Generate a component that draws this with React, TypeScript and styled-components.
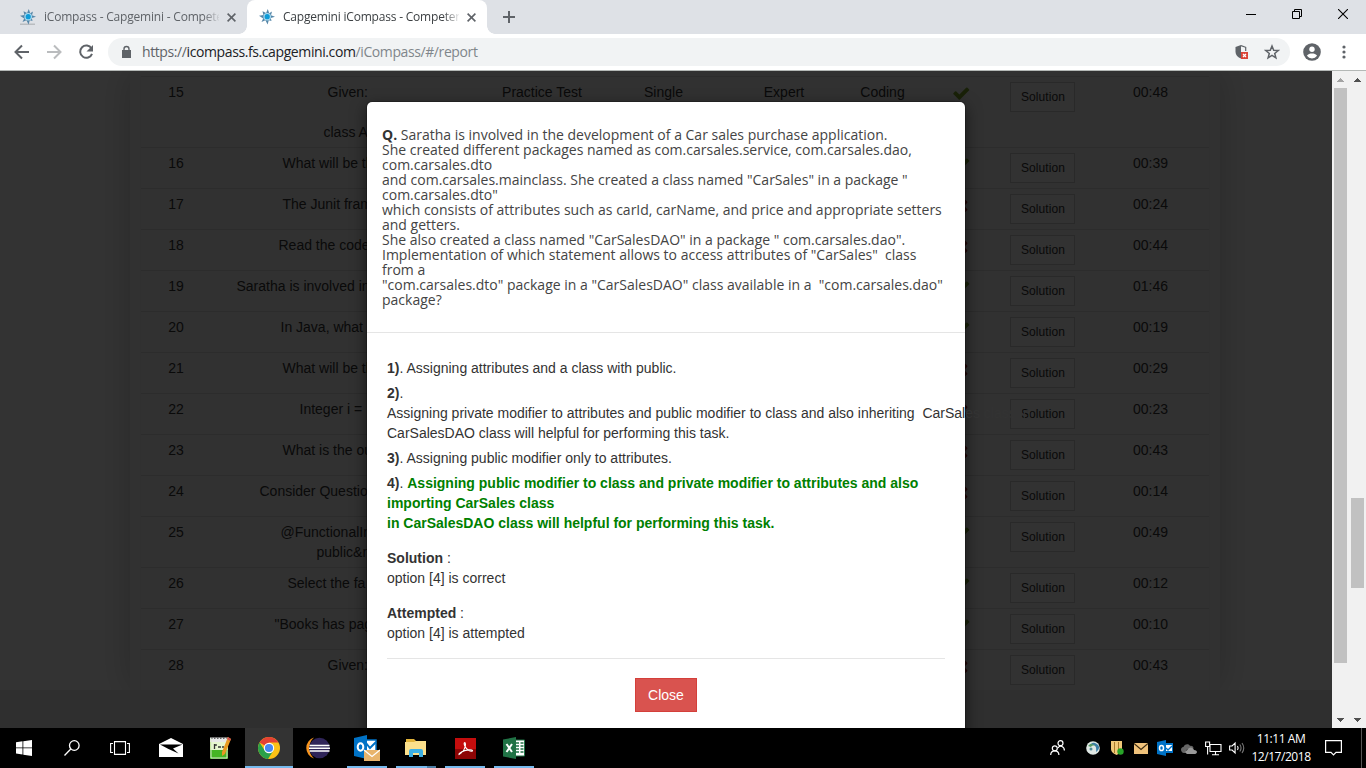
import React from 'react';
import styled, { createGlobalStyle, css } from 'styled-components';

const Global = createGlobalStyle`
  * { box-sizing: border-box; }
  html, body { margin: 0; padding: 0; overflow: hidden; }
  svg { display: block; flex: none; }
`;

const uiFont = `"Open Sans", "Noto Sans", sans-serif`;
const bodyFont = `"Liberation Sans", Arial, sans-serif`;

const Screen = styled.div`
  width: 1366px;
  height: 768px;
  display: flex;
  flex-direction: column;
  overflow: hidden;
  font-family: ${bodyFont};
`;

/* ---------- browser chrome ---------- */

const TabStrip = styled.div`
  height: 34px;
  background: #dee1e6;
  display: flex;
  align-items: stretch;
`;

const Tab = styled.div<{ $active?: boolean }>`
  position: relative;
  width: ${p => (p.$active ? 240 : 239)}px;
  margin-left: ${p => (p.$active ? 0 : 8)}px;
  padding: 0 11px 0 12px;
  display: flex;
  align-items: center;
  gap: 8px;
  border-radius: 8px 8px 0 0;
  background: ${p => (p.$active ? '#fff' : 'transparent')};
  ${p =>
    p.$active &&
    css`
      &::before,
      &::after {
        content: '';
        position: absolute;
        bottom: 0;
        width: 8px;
        height: 8px;
      }
      &::before {
        left: -8px;
        background: radial-gradient(circle at 0 0, transparent 7.5px, #fff 8px);
      }
      &::after {
        right: -8px;
        background: radial-gradient(circle at 100% 0, transparent 7.5px, #fff 8px);
      }
    `}
`;

const TabTitle = styled.span<{ $active?: boolean }>`
  flex: 1;
  min-width: 0;
  overflow: hidden;
  white-space: nowrap;
  font: 12px/16px ${uiFont};
  letter-spacing: -0.2px;
  color: ${p => (p.$active ? '#3c4043' : '#5f6368')};
  mask-image: linear-gradient(to right, #000 91%, transparent 101%);
`;

const NewTab = styled.div`
  margin-left: 16px;
  display: flex;
  align-items: center;
`;

const WindowButtons = styled.div`
  margin-left: auto;
  height: 28px;
  display: flex;
`;

const WindowButton = styled.div`
  width: 46px;
  display: flex;
  align-items: center;
  justify-content: center;
`;

const Toolbar = styled.div`
  height: 37px;
  background: #fff;
  border-bottom: 1px solid #b4b8b6;
  display: flex;
  align-items: center;
  padding-left: 12px;
`;

const NavButtons = styled.div`
  display: flex;
  gap: 12px;
  width: 96px;
`;

const Omnibox = styled.div`
  width: 1182px;
  height: 28px;
  border-radius: 14px;
  background: #f1f3f4;
  display: flex;
  align-items: center;
  padding: 0 10px 0 12px;
`;

const Url = styled.span`
  margin-left: 9px;
  flex: 1;
  font: 14px/20px ${uiFont};
  letter-spacing: -0.4px;
  color: #80868b;
  white-space: nowrap;
  b { font-weight: 400; color: #202124; }
  i { font-style: normal; color: #5f6368; }
`;

const OmniIcons = styled.div`
  display: flex;
  gap: 14px;
  align-items: center;
`;

const ToolbarEnd = styled.div`
  display: flex;
  align-items: center;
  gap: 20px;
  margin-left: 12px;
`;

/* ---------- page ---------- */

const Viewport = styled.div`
  height: 657px;
  display: flex;
`;

const Page = styled.div`
  position: relative;
  width: 1332px;
  height: 657px;
  overflow: hidden;
  background: #e8e8e8;
`;

const Sheet = styled.div`
  height: 619px;
  overflow: hidden;
  background: #fff;
  padding: 0 112px 0 130px;
`;

const Panel = styled.div`
  height: 619px;
  background: #f6f6f6;
  box-shadow: 0 0 34px rgba(0, 0, 0, 0.2);
  padding: 5px 10px 0;
`;

const Table = styled.div`
  border: solid #ededed;
  border-width: 0 1px;
  background: #f4f4f4;
`;

const Row = styled.div<{ $lines?: number }>`
  display: grid;
  grid-template-columns: 70px 273px 116px 127px 114px 83px 74px 89px 1fr;
  height: ${p => (p.$lines === 3 ? 71 : p.$lines === 2 ? 51 : 41)}px;
  padding-top: 5px;
  border-top: 1px solid #dadada;
  font-size: 14px;
  line-height: 20px;
  color: #333;
  text-align: center;
`;

const Cell = styled.div``;

const QuestionCell = styled.div`
  text-align: left;
  white-space: pre;
  overflow: hidden;
`;

const QuestionLine = styled.div<{ $indent: number }>`
  height: 20px;
  padding-left: ${p => p.$indent + 0.5}px;
`;

const MarkCell = styled.div`
  display: flex;
  justify-content: center;
  padding-top: 2px;
`;

const TimeCell = styled.div`
  padding-left: 5px;
`;

const SolutionButton = styled.button`
  width: 65px;
  height: 30px;
  margin: 0;
  padding: 0 0 0 1px;
  border: 1px solid #ccc;
  background: #f7f7f7;
  font: 12px/18px ${bodyFont};
  letter-spacing: 0.1px;
  color: #333;
`;

const Backdrop = styled.div`
  position: absolute;
  inset: 0;
  background: rgba(0, 0, 0, 0.8);
`;

const Modal = styled.div`
  position: absolute;
  left: 366px;
  top: 30px;
  width: 600px;
  height: 700px;
  border: 1px solid rgba(0, 0, 0, 0.2);
  border-radius: 6px;
  background: #fff;
  background-clip: padding-box;
  box-shadow: 0 5px 15px rgba(0, 0, 0, 0.5);
  color: #333;
`;

const ModalHeader = styled.div`
  height: 231px;
  padding: 25px 15px 0;
  border-bottom: 1px solid #e5e5e5;
  font: 14px/15px "Open Sans", sans-serif;
  color: #444;
  white-space: pre;
  b { color: #333; }
`;

const ModalBody = styled.div`
  padding: 25px 20px 0;
  font-size: 14px;
  line-height: 20px;
`;

const Choice = styled.div`
  margin-bottom: 5px;
  white-space: pre;
`;

const Correct = styled.b`
  color: #008000;
`;

const Note = styled.div`
  padding-top: 10px;
  margin-bottom: 5px;
`;

const ModalFooter = styled.div`
  margin-top: 15px;
  padding-top: 19px;
  border-top: 1px solid #e5e5e5;
  display: flex;
  justify-content: center;
`;

const CloseButton = styled.button`
  width: 62px;
  height: 34px;
  padding: 0;
  border: 1px solid #d43f3a;
  background: #d9534f;
  color: #fff;
  font: 14px/20px ${bodyFont};
`;

const ScrollTrack = styled.div`
  width: 17px;
  height: 657px;
  background: #f1f1f1;
  display: flex;
  flex-direction: column;
  align-items: center;
`;

const ScrollThumb = styled.div<{ $before: number; $size: number }>`
  width: 13px;
  margin-top: ${p => p.$before}px;
  height: ${p => p.$size}px;
  background: #c1c1c1;
`;

const ScrollEnd = styled.div<{ $last?: boolean }>`
  height: 17px;
  display: flex;
  align-items: center;
  margin-top: ${p => (p.$last ? 'auto' : '0')};
`;

/* ---------- taskbar ---------- */

const Taskbar = styled.div`
  height: 40px;
  background: #000;
  display: flex;
`;

const TaskButton = styled.div<{ $active?: boolean }>`
  position: relative;
  width: 48px;
  height: 40px;
  display: flex;
  align-items: center;
  justify-content: center;
  background: ${p => (p.$active ? '#333' : 'transparent')};
`;

const TaskApps = styled.div`
  display: flex;
  gap: 1px;
  margin-left: 3px;
`;

const Underline = styled.span<{ $full?: boolean; $stack?: boolean }>`
  position: absolute;
  bottom: 0;
  left: ${p => (p.$full ? 0 : 4)}px;
  right: ${p => (p.$full ? 0 : 4)}px;
  height: 2px;
  background: ${p => (p.$stack ? 'linear-gradient(to right, #76b9ed 31px, #4d7ea5 31px)' : '#76b9ed')};
`;

const Tray = styled.div`
  margin-left: auto;
  display: flex;
  align-items: center;
`;

const TrayIcon = styled.div<{ $w?: number }>`
  width: ${p => p.$w || 24}px;
  display: flex;
  justify-content: center;
`;

const Clock = styled.div`
  width: 64px;
  text-align: center;
  font: 12px/18px ${uiFont};
  letter-spacing: -0.45px;
  color: #fff;
  white-space: nowrap;
`;

const ShowDesktop = styled.div`
  width: 5px;
  height: 40px;
  margin-left: 8px;
  border-left: 1px solid #555;
`;

/* ---------- icons ---------- */

const Compass = ({ shade }: { shade?: boolean }) => (
  <svg width="16" height="16" viewBox="0 0 16 16">
    {shade && <path d="M0 14.500h15V16H0z" fill="#b9bcc0" />}
    <path d="M8.800 0 10.200 4.300 13 2.500l-1 3.700L16 7.800l-4.200 1.200L12.500 12 9.800 11.300 8.600 15.400 6.400 11.300 2.500 13l1.700-3.600L0 6.800l4.400-.9L3.500 2.300l3.600 1.800z" fill="#5586a8" />
    <circle cx="8.200" cy="7.700" r="3.800" fill="#a9dcf2" />
    <circle cx="8.200" cy="7.700" r="2.600" fill="#0d9bd8" />
  </svg>
);

const Cross = () => (
  <svg width="9" height="9" viewBox="0 0 9 9" stroke="#5f6368" strokeWidth="1.600">
    <path d="M.6.6l7.800 7.800M8.400.6L.6 8.400" />
  </svg>
);

const Mark = ({ ok }: { ok: boolean }) => (
  <svg width="18.500" height="18.500" viewBox="0 0 1792 1792" fill={ok ? '#7da52a' : '#b02020'}>
    {ok ? (
      <path d="M1671 566q0 40-28 68l-724 724-136 136q-28 28-68 28t-68-28l-136-136-362-362q-28-28-28-68t28-68l136-136q28-28 68-28t68 28l294 295 656-657q28-28 68-28t68 28l136 136q28 28 28 68z" />
    ) : (
      <path d="M1490 1322q0 40-28 68l-136 136q-28 28-68 28t-68-28l-294-294-294 294q-28 28-68 28t-68-28l-136-136q-28-28-28-68t28-68l294-294-294-294q-28-28-28-68t28-68l136-136q28-28 68-28t68 28l294 294 294-294q28-28 68-28t68 28l136 136q28 28 28 68t-28 68l-294 294 294 294q28 28 28 68z" />
    )}
  </svg>
);

const Arrow = ({ down, dim }: { down?: boolean; dim?: boolean }) => (
  <svg width="7" height="4" viewBox="0 0 7 4" fill={dim ? '#a3a3a3' : '#505050'} shapeRendering="crispEdges">
    <path d={down ? 'M0 0h7L3.500 4z' : 'M0 4h7L3.500 0z'} />
  </svg>
);

const OutlookIcon = ({ size }: { size: number }) => (
  <svg width={size} height={size} viewBox="0 0 26 26">
    <path d="M11 5h11v14H11z" fill="#fff" stroke="#0072c6" strokeWidth="1.500" />
    <path d="M12 8l4 5 6-6" fill="none" stroke="#0072c6" strokeWidth="2" />
    <path d="M0 3l13-3v24L0 21z" fill="#0072c6" />
    <ellipse cx="6.500" cy="12" rx="2.800" ry="3.700" fill="none" stroke="#fff" strokeWidth="2" />
    <path d="M10 15h16v11H10z" fill="#e8b46c" />
    <path d="M10 15l8 6.500 8-6.500" fill="none" stroke="#fff" strokeWidth="1.200" />
  </svg>
);

/* ---------- data ---------- */

type RowData = { n: number; q: [string, number][]; ok: boolean; t: string };

const rows: RowData[] = [
  { n: 15, q: [['Given:', 116], ['', 0], ['class A', 112]], ok: true, t: '00:48' },
  { n: 16, q: [['What will be the', 71]], ok: true, t: '00:39' },
  { n: 17, q: [['The Junit frame', 71]], ok: false, t: '00:24' },
  { n: 18, q: [['Read the code', 67]], ok: false, t: '00:44' },
  { n: 19, q: [['Saratha is involved in', 25]], ok: true, t: '01:46' },
  { n: 20, q: [['In Java, what', 69]], ok: true, t: '00:19' },
  { n: 21, q: [['What will be the', 71]], ok: false, t: '00:29' },
  { n: 22, q: [['Integer i =', 88]], ok: false, t: '00:23' },
  { n: 23, q: [['What is the out', 71]], ok: false, t: '00:43' },
  { n: 24, q: [['Consider Question', 48]], ok: false, t: '00:14' },
  { n: 25, q: [['@FunctionalInt', 69], ['public&n', 105]], ok: true, t: '00:49' },
  { n: 26, q: [['Select the fa', 76]], ok: true, t: '00:12' },
  { n: 27, q: [['"Books has pag', 63]], ok: true, t: '00:10' },
  { n: 28, q: [['Given:', 116]], ok: false, t: '00:43' },
];

const questionText = [
  'She created different packages named as com.carsales.service, com.carsales.dao,',
  'com.carsales.dto',
  'and com.carsales.mainclass. She created a class named "CarSales" in a package "',
  'com.carsales.dto"',
  'which consists of attributes such as carId, carName, and price and appropriate setters',
  'and getters.',
  'She also created a class named "CarSalesDAO" in a package " com.carsales.dao".',
  'Implementation of which statement allows to access attributes of "CarSales"  class',
  'from a',
  '"com.carsales.dto" package in a "CarSalesDAO" class available in a  "com.carsales.dao"',
  'package?',
].join('\n');

const Browser = () => (
  <>
    <TabStrip>
      <Tab>
        <Compass shade />
        <TabTitle>iCompass - Capgemini - Competency</TabTitle>
        <Cross />
      </Tab>
      <Tab $active>
        <Compass />
        <TabTitle $active>Capgemini iCompass - Competency</TabTitle>
        <Cross />
      </Tab>
      <NewTab>
        <svg width="12" height="12" viewBox="0 0 12 12" stroke="#5f6368" strokeWidth="2"><path d="M6 0v12M0 6h12" /></svg>
      </NewTab>
      <WindowButtons>
        <WindowButton>
          <svg width="10" height="10" viewBox="0 0 10 10"><path d="M0 5h10v1H0z" /></svg>
        </WindowButton>
        <WindowButton>
          <svg width="10" height="10" viewBox="0 0 10 10" fill="none" stroke="#000"><path d="M.5 2.500h7v7h-7zM2.500 2.500v-2h7v7h-2" /></svg>
        </WindowButton>
        <WindowButton>
          <svg width="10" height="10" viewBox="0 0 10 10" stroke="#000" strokeWidth="1.100"><path d="M0 0l10 10M10 0L0 10" /></svg>
        </WindowButton>
      </WindowButtons>
    </TabStrip>
    <Toolbar>
      <NavButtons>
        <svg width="20" height="20" viewBox="0 0 20 20" fill="none" stroke="#5f6368" strokeWidth="2"><path d="M17 10H4M10 3.500L3.500 10l6.500 6.500" /></svg>
        <svg width="20" height="20" viewBox="0 0 20 20" fill="none" stroke="#babcbe" strokeWidth="2"><path d="M3 10h13M10 3.500l6.500 6.500-6.500 6.500" /></svg>
        <svg width="20" height="20" viewBox="0 0 20 20" fill="none" stroke="#5f6368" strokeWidth="2"><path d="M15.500 6.500A6.100 6.100 0 1 0 16 11.800" /><path d="M17 3v6.500h-6.500z" fill="#5f6368" stroke="none" /></svg>
      </NavButtons>
      <Omnibox>
        <svg width="13" height="14" viewBox="0 0 13 14"><path d="M2 5h9v8H2z" fill="#5f6368" /><path d="M4 5.500V4a2.500 2.500 0 0 1 5 0v1.500" fill="none" stroke="#5f6368" strokeWidth="1.400" /></svg>
        <Url><i>https://</i><b>icompass.fs.capgemini.com</b>/iCompass/#/report</Url>
        <OmniIcons>
          <svg width="16" height="16" viewBox="0 0 16 16">
            <path d="M7 1L1.500 3v4.500c0 3.500 2.500 6 5.500 7z" fill="#5f6368" />
            <path d="M7 1.600l4.700 1.700V7" fill="none" stroke="#5f6368" strokeWidth="1.200" />
            <path d="M7 8h7v7H7z" fill="#db4437" />
            <path d="M9 10l3 3M12 10l-3 3" stroke="#fff" strokeWidth="1.200" />
          </svg>
          <svg width="16" height="16" viewBox="0 0 16 16" fill="none" stroke="#5f6368" strokeWidth="1.500"><path d="M8 2l1.700 4.200 4.500.3-3.500 2.900 1.200 4.400L8 11.400l-3.900 2.400 1.200-4.400L1.800 6.500l4.500-.3z" /></svg>
        </OmniIcons>
      </Omnibox>
      <ToolbarEnd>
        <svg width="20" height="20" viewBox="0 0 20 20">
          <circle cx="10" cy="10" r="8.800" fill="#5f6368" />
          <circle cx="10" cy="7.200" r="2.700" fill="#fff" />
          <path d="M4.900 13.800c1-1.800 3-2.400 5.100-2.400s4.100.6 5.100 2.400a6.300 6.300 0 0 1-10.200 0z" fill="#fff" />
        </svg>
        <svg width="4" height="14" viewBox="0 0 4 14" fill="#5f6368"><circle cx="2" cy="2" r="1.600" /><circle cx="2" cy="7" r="1.600" /><circle cx="2" cy="12" r="1.600" /></svg>
      </ToolbarEnd>
    </Toolbar>
  </>
);

const SolutionModal = () => (
  <Modal>
    <ModalHeader>
      <b>Q.</b> Saratha is involved in the development of a Car sales purchase application.{'\n'}
      {questionText}
    </ModalHeader>
    <ModalBody>
      <Choice><b>1)</b>. Assigning attributes and a class with public.</Choice>
      <Choice>
        <b>2)</b>.{'\n'}
        {'Assigning private modifier to attributes and public modifier to class and also inheriting  CarSales class in\nCarSalesDAO class will helpful for performing this task.'}
      </Choice>
      <Choice><b>3)</b>. Assigning public modifier only to attributes.</Choice>
      <Choice>
        <b>4)</b>. <Correct>{'Assigning public modifier to class and private modifier to attributes and also\nimporting CarSales class\nin CarSalesDAO class will helpful for performing this task.'}</Correct>
      </Choice>
      <Note><b>Solution</b> :<br />option [4] is correct</Note>
      <Note><b>Attempted</b> :<br />option [4] is attempted</Note>
      <ModalFooter><CloseButton>Close</CloseButton></ModalFooter>
    </ModalBody>
  </Modal>
);

const StartIcons = () => (
  <>
    <TaskButton>
      <svg width="16" height="16" viewBox="0 0 16 16" fill="#fff"><path d="M0 2.200l6.500-.9v6.200H0zM7.300 1.200L16 0v7.500H7.300zM0 8.300h6.500v6.200L0 13.600zM7.300 8.300H16V16l-8.700-1.200z" /></svg>
    </TaskButton>
    <TaskButton>
      <svg width="16" height="16" viewBox="0 0 16 16" fill="none" stroke="#fff" strokeWidth="1.300"><circle cx="10.300" cy="5.500" r="4.800" /><path d="M6.800 9L.5 15.500" /></svg>
    </TaskButton>
    <TaskButton>
      <svg width="20" height="14" viewBox="0 0 20 14" fill="none" stroke="#fff" strokeWidth="1.100"><path d="M4.500.6h11v12.800h-11zM3 2.500H.6v9H3M17 2.500h2.400v9H17" /></svg>
    </TaskButton>
  </>
);

const AppIcons = () => (
  <TaskApps>
    <TaskButton>
      <svg width="24" height="20" viewBox="0 0 24 20"><path d="M0 6l12-6 12 6v13H0z" fill="#fff" /><path d="M1 6.500h22.500l-9.500 4 5.500 5L9.500 11z" fill="#000" /></svg>
    </TaskButton>
    <TaskButton>
      <svg width="22" height="24" viewBox="0 0 22 24">
        <path d="M1 2h18v21H1z" fill="#b6e878" /><path d="M1 14h18v9H1z" fill="#45b524" /><path d="M1 1.500h18V6H1z" fill="#e8e8e8" /><path d="M2 2h16" stroke="#666" strokeWidth="2" strokeDasharray="1.500 1.500" />
        <path d="M2 6h16v8H2z" fill="#e6f7cf" /><path d="M5.500 8v5M7 8v2M9 11h3M13 11h2" stroke="#333" strokeWidth="1.300" />
        <path d="M2 2v20h16V2" fill="none" stroke="#d9e8cc" />
        <path d="M19 1l3 2-6 15-3 2v-4z" fill="#e79a22" /><path d="M19 1l3 2-1 2-3-2z" fill="#cf5050" />
      </svg>
    </TaskButton>
    <TaskButton $active>
      <svg width="22" height="22" viewBox="0 0 22 22">
        <circle cx="11" cy="11" r="11" fill="#fbc116" />
        <path d="M11 11L1.500 5.500A11 11 0 0 1 20.500 5.500H11z" fill="#e34133" />
        <path d="M1.500 5.500A11 11 0 0 0 10 22l5.500-8.500-9-.5z" fill="#2aa04a" />
        <circle cx="11" cy="11" r="5.200" fill="#fff" /><circle cx="11" cy="11" r="4.100" fill="#4688f1" />
      </svg>
      <Underline $full />
    </TaskButton>
    <TaskButton>
      <svg width="24" height="22" viewBox="0 0 24 22">
        <path d="M8 0.500A11 11 0 0 0 8 21.500A14 14 0 0 1 8 .5z" fill="#f7941e" />
        <circle cx="13.500" cy="11" r="10.300" fill="#2f2459" />
        <path d="M3.500 7.800h20v1.500h-20zM3 10.500h21V12H3zM3.500 13.300h20v1.500h-20z" fill="#fff" />
      </svg>
    </TaskButton>
    <TaskButton><OutlookIcon size={26} /><Underline /></TaskButton>
    <TaskButton>
      <svg width="22" height="19" viewBox="0 0 22 19"><path d="M1 0h8l2 2h9v3H1z" fill="#e3b43a" /><path d="M0 3h9l2-1h10v14H0z" fill="#fbe08c" /><path d="M4 18v-6q0-2 2-2h10q2 0 2 2v6h-4v-4H8v4z" fill="#3cb0e5" /></svg>
      <Underline $stack />
    </TaskButton>
    <TaskButton>
      <svg width="21" height="21" viewBox="0 0 21 21"><path d="M0 0h21v21H0z" fill="#c40d0d" /><path d="M0 11h21v10H0z" fill="#8d0505" /><path d="M4 16.500c3-1.500 5.500-5 6.300-8.500.5-2.500-.2-3.500-.8-3.300-1 .4.200 5.300 4 7.500 2.500 1.500 4.300 1 4 .3-.5-1.200-7-1-11 1.500-2 1.200-2.800 2-2.500 2.500z" fill="none" stroke="#fff" strokeWidth="1.100" /></svg>
      <Underline />
    </TaskButton>
    <TaskButton>
      <svg width="22" height="22" viewBox="0 0 22 22"><path d="M11 3h10.500v16H11z" fill="#fff" stroke="#207245" /><path d="M13 6h3M17.500 6h3M13 9h3M17.500 9h3M13 12h3M17.500 12h3M13 15h3M17.500 15h3" stroke="#207245" strokeWidth="1.300" /><path d="M0 2.500L13 0v22L0 19.500z" fill="#207245" /><path d="M3.500 7l5.500 8M9 7l-5.500 8" stroke="#fff" strokeWidth="2" /></svg>
      <Underline />
    </TaskButton>
  </TaskApps>
);

const TrayIcons = () => (
  <Tray>
    <TrayIcon $w={48}>
      <svg width="15" height="16" viewBox="0 0 15 16" fill="none" stroke="#fff" strokeWidth="1.200"><circle cx="4.800" cy="8.300" r="2.500" /><path d="M.7 15c0-5.500 8.200-5.500 8.200 0" /><circle cx="10.500" cy="3.200" r="2.500" /><path d="M8 8c2-3.200 6.400-1.700 6.400 2.500" /></svg>
    </TrayIcon>
    <TrayIcon>
      <svg width="14" height="14" viewBox="0 0 14 14"><circle cx="7" cy="7" r="6.800" fill="#dfe8e4" /><path d="M2 5c3-4 8-3 9 1-2-2-5-2-6 0z" fill="#579a66" /><path d="M5 3c4 0 6 3 5 8 3-2 4-5 2-7S7.500.5 5 3z" fill="#3b7ea6" /><circle cx="5" cy="8" r="1.500" fill="#4c8b9a" /></svg>
    </TrayIcon>
    <TrayIcon>
      <svg width="13" height="14" viewBox="0 0 13 14"><path d="M0 0h11v8c0 3-3 5-5.500 6C3 13 0 11 0 8z" fill="#f0c878" /><path d="M3.500 1v11M7.500 1v11" stroke="#a77a2c" /><circle cx="9.500" cy="10.500" r="3.200" fill="#28a428" /></svg>
    </TrayIcon>
    <TrayIcon>
      <svg width="14" height="11" viewBox="0 0 14 11"><path d="M0 0h14v11H0z" fill="#f0c27b" /><path d="M0 .5l7 6 7-6" fill="none" stroke="#3a2a10" strokeWidth="1.200" /></svg>
    </TrayIcon>
    <TrayIcon>
      <svg width="16" height="16" viewBox="0 0 16 16"><path d="M8 3h8v10H8z" fill="#0072c6" /><path d="M9 5h6v6H9z" fill="#fff" /><path d="M9 8l2 2 4-4" fill="none" stroke="#0072c6" strokeWidth="1.300" /><path d="M0 2l9-2v16l-9-2z" fill="#0072c6" /><ellipse cx="4.500" cy="8" rx="2" ry="2.600" fill="none" stroke="#fff" strokeWidth="1.500" /></svg>
    </TrayIcon>
    <TrayIcon>
      <svg width="16" height="11" viewBox="0 0 16 11"><path d="M0 6.500C0 4.500 2 4 2.500 4 3 1 8 0 9 3c2-.5 3.500.5 3.500 2.500L5 7v3H3C1 10 0 8 0 6.500z" fill="#666" /><path d="M6 11c-2.500-1-1.500-4 .5-4C7.500 3.500 12 3.500 13 7c4 0 3.500 4 1 4z" fill="#999" /></svg>
    </TrayIcon>
    <TrayIcon>
      <svg width="17" height="15" viewBox="0 0 17 15" fill="none" stroke="#fff" strokeWidth="1.100"><path d="M5 3.500h11v7H5zM10.500 10.500v3M7 13.700h7M.6 1h4v4.500h-4zM2.600 5.500v8" /></svg>
    </TrayIcon>
    <TrayIcon>
      <svg width="16" height="14" viewBox="0 0 16 14" fill="none" stroke="#fff" strokeWidth="1.100"><path d="M.6 5h2.500l3-3v10l-3-3H.6zM8.500 5q1.300 2 0 4" /><path d="M10.800 3.500q2.500 3.500 0 7M13 2q3.500 5 0 10" stroke="#777" /></svg>
    </TrayIcon>
    <Clock>11:11 AM<br />12/17/2018</Clock>
    <TrayIcon $w={40}>
      <svg width="17" height="16" viewBox="0 0 17 16" fill="none" stroke="#fff" strokeWidth="1.200"><path d="M.6.6h15.800v11.800H11L8.500 15 6 12.400H.6z" /></svg>
    </TrayIcon>
    <ShowDesktop />
  </Tray>
);

export default function App() {
  return (
    <Screen>
      <Global />
      <Browser />
      <Viewport>
        <Page>
          <Sheet>
            <Panel>
              <Table>
                {rows.map(r => (
                  <Row key={r.n} $lines={r.q.length}>
                    <Cell>{r.n}</Cell>
                    <QuestionCell>
                      {r.q.map(([text, indent], i) => (
                        <QuestionLine key={i} $indent={indent}>{text}</QuestionLine>
                      ))}
                    </QuestionCell>
                    <Cell>{r.n === 15 && 'Practice Test'}</Cell>
                    <Cell>{r.n === 15 && 'Single'}</Cell>
                    <Cell>{r.n === 15 && 'Expert'}</Cell>
                    <Cell>{r.n === 15 && 'Coding'}</Cell>
                    <MarkCell><Mark ok={r.ok} /></MarkCell>
                    <Cell><SolutionButton>Solution</SolutionButton></Cell>
                    <TimeCell>{r.t}</TimeCell>
                  </Row>
                ))}
              </Table>
            </Panel>
          </Sheet>
          <Backdrop />
          <SolutionModal />
        </Page>
        <ScrollTrack>
          <ScrollEnd><Arrow dim /></ScrollEnd>
          <ScrollThumb $before={0} $size={575} />
          <ScrollEnd $last><Arrow down /></ScrollEnd>
        </ScrollTrack>
        <ScrollTrack>
          <ScrollEnd><Arrow /></ScrollEnd>
          <ScrollThumb $before={410} $size={90} />
          <ScrollEnd $last><Arrow down /></ScrollEnd>
        </ScrollTrack>
      </Viewport>
      <Taskbar>
        <StartIcons />
        <AppIcons />
        <TrayIcons />
      </Taskbar>
    </Screen>
  );
}
